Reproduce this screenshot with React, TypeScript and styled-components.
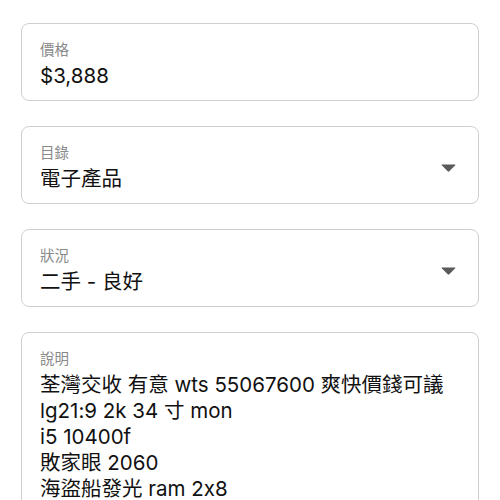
import styled, { createGlobalStyle } from "styled-components";

const Global = createGlobalStyle`
  html, body {
    margin: 0;
    padding: 0;
    background: #ffffff;
  }
  body {
    font-family: "Inter", "Noto Sans CJK TC", sans-serif;
    font-feature-settings: "calt" 0;
    color: #111111;
  }
`;

const Page = styled.div`
  display: flex;
  flex-direction: column;
  gap: 25px;
  padding: 0 21px;
  height: 500px;
  overflow: hidden;
  box-sizing: border-box;
`;

const Divider = styled.div`
  height: 1px;
  margin: 17px 0 -19px 4px;
  background: #f2f2f2;
`;

const Field = styled.div<{ $tall?: boolean }>`
  display: flex;
  align-items: ${(p) => (p.$tall ? "flex-start" : "center")};
  border: 1px solid #cfcfcf;
  border-radius: 8px;
  padding: 16px 22px 11px 18px;
  min-height: ${(p) => (p.$tall ? "260px" : "auto")};
  box-sizing: border-box;
`;

const Body = styled.div`
  flex: 1;
  display: flex;
  flex-direction: column;
`;

const Label = styled.div`
  font-size: 14.5px;
  line-height: 20px;
  color: #8a8a8a;
`;

const Value = styled.div`
  margin-top: 3px;
  font-size: 20.5px;
  line-height: 26px;
  color: #111111;
  white-space: pre-line;
`;

const Caret = styled.svg`
  width: 15px;
  height: 8px;
  flex-shrink: 0;
`;

function Arrow() {
  return (
    <Caret viewBox="0 0 15 8">
      <path d="M1 0.5 H14 Q14.8 0.5 14.2 1.3 L8.3 7.3 Q7.5 8 6.7 7.3 L0.8 1.3 Q0.2 0.5 1 0.5 Z" fill="#5a5a5a" />
    </Caret>
  );
}

export default function App() {
  return (
    <>
      <Global />
      <Page>
        <Divider />
        <Field>
          <Body>
            <Label>價格</Label>
            <Value>$3,888</Value>
          </Body>
        </Field>
        <Field>
          <Body>
            <Label>目錄</Label>
            <Value>電子產品</Value>
          </Body>
          <Arrow />
        </Field>
        <Field>
          <Body>
            <Label>狀況</Label>
            <Value>二手 - 良好</Value>
          </Body>
          <Arrow />
        </Field>
        <Field $tall>
          <Body>
            <Label>說明</Label>
            <Value>
              {"荃灣交收 有意 wts 55067600 爽快價錢可議\nlg21:9 2k 34 寸 mon\ni5 10400f\n敗家眼 2060\n海盜船發光 ram 2x8"}
            </Value>
          </Body>
        </Field>
      </Page>
    </>
  );
}
